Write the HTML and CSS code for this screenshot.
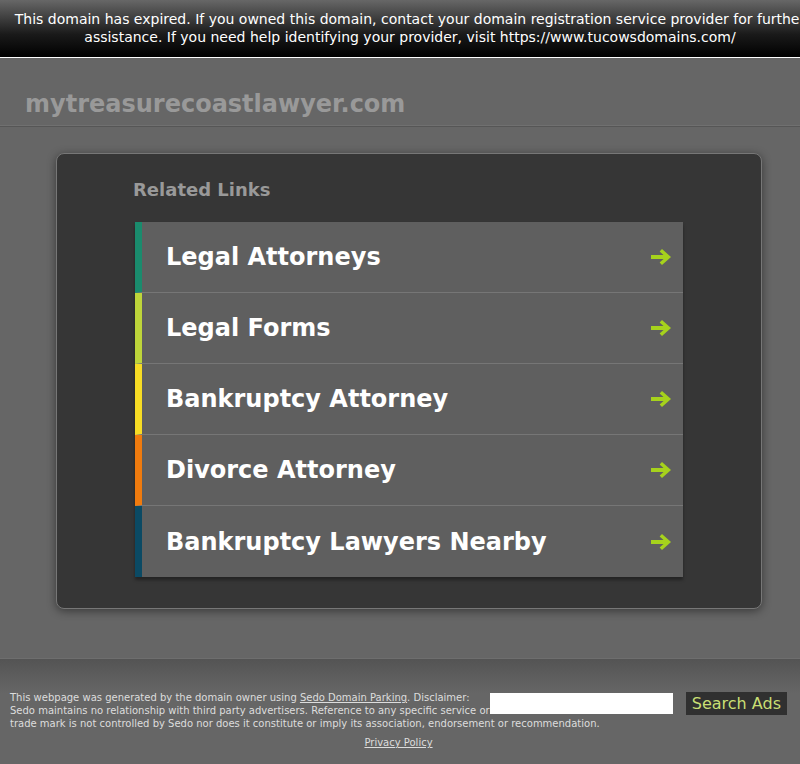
FILE: index.html
```html
<!DOCTYPE html>
<html lang="en">
<head>
    <meta charset="UTF-8">
    <meta name="viewport" content="width=device-width, initial-scale=1.0">
    <title>mytreasurecoastlawyer.com</title>
    <link rel="stylesheet" href="styles.css">
</head>
<body>
    <div class="expired">
        This domain has expired. If you owned this domain, contact your domain registration service provider for further assistance. If you need help identifying your provider, visit https://www.tucowsdomains.com/
    </div>

    <div class="header">
        <h1>mytreasurecoastlawyer.com</h1>
    </div>

    <div class="content">
        <h2>Related Links</h2>
        <ul class="links">
            <li class="c1"><a href="#">Legal Attorneys</a><svg class="arrow" viewBox="0 0 20 16"><path d="M0 6h12.5L8.6 2.4 11 0l9 8-9 8-2.4-2.4L12.5 10H0z"/></svg></li>
            <li class="c2"><a href="#">Legal Forms</a><svg class="arrow" viewBox="0 0 20 16"><path d="M0 6h12.5L8.6 2.4 11 0l9 8-9 8-2.4-2.4L12.5 10H0z"/></svg></li>
            <li class="c3"><a href="#">Bankruptcy Attorney</a><svg class="arrow" viewBox="0 0 20 16"><path d="M0 6h12.5L8.6 2.4 11 0l9 8-9 8-2.4-2.4L12.5 10H0z"/></svg></li>
            <li class="c4"><a href="#">Divorce Attorney</a><svg class="arrow" viewBox="0 0 20 16"><path d="M0 6h12.5L8.6 2.4 11 0l9 8-9 8-2.4-2.4L12.5 10H0z"/></svg></li>
            <li class="c5"><a href="#">Bankruptcy Lawyers Nearby</a><svg class="arrow" viewBox="0 0 20 16"><path d="M0 6h12.5L8.6 2.4 11 0l9 8-9 8-2.4-2.4L12.5 10H0z"/></svg></li>
        </ul>
    </div>

    <div class="footer">
        <form class="search">
            <input type="text">
            <button type="button">Search Ads</button>
        </form>
        <p class="disclaimer">This webpage was generated by the domain owner using <a href="#">Sedo Domain Parking</a>. Disclaimer: Sedo maintains no relationship with third party advertisers. Reference to any specific service or trade mark is not controlled by Sedo nor does it constitute or imply its association, endorsement or recommendation.</p>
        <p class="privacy"><a href="#">Privacy Policy</a></p>
    </div>
</body>
</html>
```

FILE: styles.css
```css
* {
    box-sizing: border-box;
    margin: 0;
    padding: 0;
}

html, body {
    overflow-x: hidden;
}

body {
    background-color: #666;
    font-family: "DejaVu Sans", sans-serif;
}

.expired {
    width: 100%;
    box-sizing: content-box;
    padding: 10px 10px 11px;
    height: 36px;
    background: linear-gradient(#676767, #1a1a1a 60%, #000);
    border-bottom: 1px solid #fff;
    color: #fff;
    font-size: 14px;
    line-height: 18px;
    text-align: center;
}

.header {
    padding: 32px 25px 8px;
    border-bottom: 1px solid #565656;
    box-shadow: inset 0 -1px 0 #707070;
}

.header h1 {
    color: #999;
    font-size: 24px;
    line-height: 28px;
}

.content {
    width: 706px;
    margin: 26px 0 0 56px;
    padding: 25px 78px 31px;
    background-color: #363636;
    border: 1px solid #777;
    border-radius: 8px;
    box-shadow: 0 2px 10px rgba(0,0,0,0.45);
}

.content h2 {
    color: #999;
    font-size: 18px;
    line-height: 22px;
    margin: 0 0 21px -2px;
}

.links {
    list-style: none;
    box-shadow: 0 3px 3px rgba(0,0,0,0.35);
}

.links li {
    display: flex;
    align-items: center;
    justify-content: space-between;
    height: 71px;
    padding: 0 12px 0 24px;
    background-color: #5f5f5f;
    border-left: 7px solid;
    border-bottom: 1px solid #767676;
}

.links li:last-child {
    border-bottom: none;
}

.links a {
    color: #fff;
    font-size: 24px;
    font-weight: bold;
    text-decoration: none;
}

.arrow {
    width: 20px;
    height: 16px;
    fill: #a6d21c;
}

.c1 { border-left-color: #1a8b6d !important; }
.c2 { border-left-color: #bed53a !important; }
.c3 { border-left-color: #f7dc24 !important; }
.c4 { border-left-color: #f07b0e !important; }
.c5 { border-left-color: #0b4a64 !important; }

.footer {
    margin-top: 49px;
    padding: 32px 13px 20px 10px;
    border-top: 1px solid #6e6e6e;
    background: linear-gradient(#545454, #666 34px);
    color: #ddd;
    font-size: 10px;
    line-height: 13px;
}

.footer a {
    color: #ddd;
}

.search {
    float: right;
    display: flex;
    align-items: center;
    gap: 13px;
    margin-top: 1px;
}

.search input {
    width: 183px;
    height: 21px;
    border: none;
    background: #fff;
}

.search button {
    height: 23px;
    padding: 0 6px;
    border: none;
    background-color: #303030;
    color: #c9df74;
    font-family: "DejaVu Sans", sans-serif;
    font-size: 16px;
}

.privacy {
    margin-top: 6px;
    text-align: center;
}
```
